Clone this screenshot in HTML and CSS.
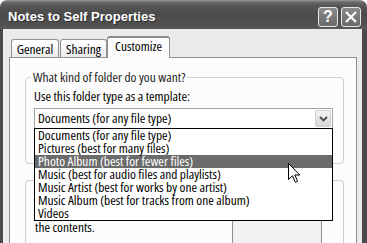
FILE: index.html
```html
<!DOCTYPE html>
<html>
<head>
<meta charset="utf-8">
<link rel="stylesheet" href="styles.css">
</head>
<body>
<div class="window">
  <div class="titlebar">
    <span class="title">Notes to Self Properties</span>
    <div class="caption-buttons">
      <span class="cap-btn">?</span>
      <span class="cap-btn">
        <svg width="14" height="14" viewBox="0 0 14 14"><path d="M2 2 L12 12 M12 2 L2 12" stroke="#fff" stroke-width="2.2" fill="none"/></svg>
      </span>
    </div>
  </div>
  <div class="body">
    <div class="tabs">
      <div class="tab t-general">General</div>
      <div class="tab t-sharing">Sharing</div>
      <div class="tab t-custom active">Customize</div>
    </div>
    <div class="panel">
      <fieldset class="group g1">
        <legend>What kind of folder do you want?</legend>
        <div class="label">Use this folder type as a template:</div>
        <div class="combo-wrap">
          <div class="combo">
            <span class="combo-text">Documents (for any file type)</span>
            <span class="combo-btn">
              <svg width="9" height="6" viewBox="0 0 9 6"><path d="M1 1 L4.5 4.5 L8 1" stroke="#4a4a4a" stroke-width="1.8" fill="none"/></svg>
            </span>
          </div>
          <ul class="dropdown">
            <li>Documents (for any file type)</li>
            <li>Pictures (best for many files)</li>
            <li class="sel">Photo Album (best for fewer files)</li>
            <li>Music (best for audio files and playlists)</li>
            <li>Music Artist (best for works by one artist)</li>
            <li>Music Album (best for tracks from one album)</li>
            <li>Videos</li>
            <svg class="cursor" width="13" height="21" viewBox="0 0 13 21"><path d="M0.5 0.5 L0.5 16.5 L4.5 12.8 L7.3 19.3 L9.6 18.3 L6.9 12 L11.8 12 Z" fill="#fff" stroke="#000" stroke-width="1" stroke-linejoin="miter"/></svg>
          </ul>
        </div>
      </fieldset>
      <div class="group g2">
        <div class="g2-text">the contents.</div>
        <div class="preview"></div>
      </div>
    </div>
  </div>
</div>
</body>
</html>
```
FILE: styles.css
```css
html, body {
  margin: 0;
  padding: 0;
  background: #ffffff;
}
body {
  font-family: "Open Sans", "DejaVu Sans Condensed", sans-serif;
  font-stretch: condensed;
  font-size: 13.4px;
  color: #000;
}
.window {
  width: 367px;
  height: 243px;
  overflow: hidden;
  display: flex;
  flex-direction: column;
}
.titlebar {
  height: 29px;
  box-sizing: border-box;
  flex: none;
  display: flex;
  align-items: center;
  padding: 0 6px 0 8px;
  border-radius: 7px 7px 0 0;
  background: linear-gradient(#9a9a9a 0, #6a6a6a 2px, #555 6px, #4b4b4b 50%, #505050 85%, #5a5a5a 100%);
}
.title {
  font-family: "Liberation Sans", Arial, sans-serif;
  font-stretch: normal;
  font-weight: bold;
  font-size: 13px;
  color: #fff;
  padding-top: 3px;
  text-shadow: 1px 1px 0 #2e2e2e;
}
.caption-buttons {
  margin-left: auto;
  display: flex;
  gap: 3px;
  padding-top: 4px;
}
.cap-btn {
  width: 20px;
  height: 20px;
  box-sizing: border-box;
  border: 1px solid #e8e8e8;
  border-radius: 3px;
  background: linear-gradient(#8a8a8a, #6a6a6a);
  color: #fff;
  font-family: "Liberation Sans", Arial, sans-serif;
  font-stretch: normal;
  font-weight: bold;
  font-size: 16px;
  display: flex;
  align-items: center;
  justify-content: center;
  line-height: 1;
}
.body {
  flex: 1;
  display: flex;
  flex-direction: column;
  background: #ebebeb;
  border-left: 3px solid #4a4a4a;
  border-right: 5px solid #4a4a4a;
  padding: 7px 5px 0 6px;
  min-height: 0;
}
.tabs {
  display: flex;
  align-items: flex-end;
  padding-left: 2px;
  height: 21px;
  flex: none;
  position: relative;
  z-index: 1;
}
.tab {
  box-sizing: border-box;
  height: 18px;
  border: 1px solid #919191;
  border-bottom: none;
  border-radius: 3px 3px 0 0;
  background: linear-gradient(#ffffff, #ececec);
  display: flex;
  align-items: center;
  justify-content: center;
  padding-top: 1px;
  line-height: 13px;
}
.t-general { width: 48px; margin-right: 1px; }
.t-sharing { width: 47px; }
.t-custom { width: 63px; }
.tab.active {
  height: 22px;
  margin-bottom: -1px;
  background: #fcfcfc;
  border-top: 2px solid #8a8a8a;
  padding-top: 0;
  padding-bottom: 4px;
}
.panel {
  flex: 1;
  background: #fcfcfc;
  border: 1px solid #919191;
  border-bottom: none;
  display: flex;
  flex-direction: column;
  padding: 0 12px 0 15px;
}
.group {
  border: 1px solid #d0d0d0;
  border-radius: 4px;
  margin: 0;
  padding: 0 10px 0 8px;
  min-width: 0;
}
.group legend {
  padding: 0 2px;
  margin-left: -3px;
  line-height: 14px;
  color: #1e1e1e;
}
.g1 {
  margin-top: 12px;
  padding-bottom: 34px;
}
.label {
  margin-top: 6px;
  line-height: 13px;
}
.combo-wrap {
  position: relative;
  margin-top: 5px;
}
.combo {
  height: 21px;
  box-sizing: border-box;
  border: 1px solid #a3a3a3;
  background: #fff;
  display: flex;
  align-items: center;
  padding: 0 1px 0 3px;
}
.combo-text {
  flex: 1;
  line-height: 13px;
}
.combo-btn {
  width: 16px;
  height: 17px;
  box-sizing: border-box;
  border: 1px solid #cfcfcf;
  border-radius: 2px;
  background: linear-gradient(#f4f4f4, #d8d8d8);
  display: flex;
  align-items: center;
  justify-content: center;
}
.dropdown {
  position: absolute;
  left: 0;
  top: 20px;
  width: 299px;
  box-sizing: border-box;
  margin: 0;
  padding: 0;
  list-style: none;
  background: #fff;
  border: 1px solid #000;
  z-index: 5;
}
.dropdown li {
  height: 13px;
  line-height: 13px;
  padding-left: 3px;
  white-space: nowrap;
}
.dropdown li.sel {
  background: #6b6b6b;
  color: #fff;
}
.cursor {
  position: absolute;
  left: 253px;
  top: 34px;
}
.g2 {
  margin-top: 16px;
  flex: 1;
  display: flex;
  align-items: flex-end;
  border-bottom: none;
  border-radius: 4px 4px 0 0;
}
.g2-text {
  flex: 1;
  line-height: 13px;
  padding-left: 1px;
  margin-bottom: 9px;
}
.preview {
  align-self: stretch;
  width: 90px;
  box-sizing: border-box;
  border: 1px solid #8f8f8f;
  border-bottom: none;
  background: #f2f2f2;
  margin: 20px 11px 0 0;
}
```
